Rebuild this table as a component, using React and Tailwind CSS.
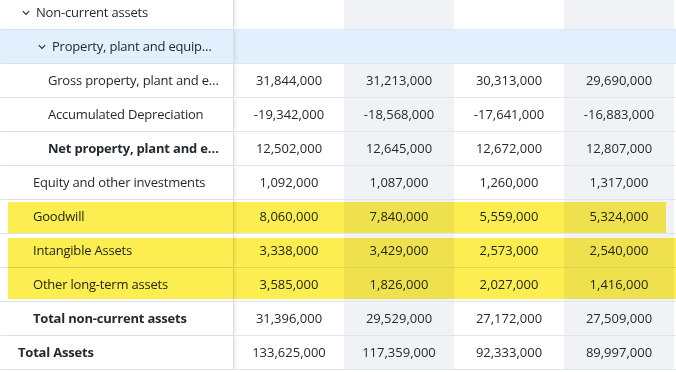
import React from 'react';

const ROWS = [
  { label: 'Non-current assets', indent: 'pl-[22px]', caret: true, values: ['', '', '', ''] },
  { label: 'Property, plant and equipment', indent: 'pl-[38px]', caret: true, blue: true, values: ['', '', '', ''] },
  { label: 'Gross property, plant and equipment', indent: 'pl-[48px]', values: ['31,844,000', '31,213,000', '30,313,000', '29,690,000'] },
  { label: 'Accumulated Depreciation', indent: 'pl-[48px]', values: ['-19,342,000', '-18,568,000', '-17,641,000', '-16,883,000'] },
  { label: 'Net property, plant and equipment', indent: 'pl-[48px]', bold: true, values: ['12,502,000', '12,645,000', '12,672,000', '12,807,000'] },
  { label: 'Equity and other investments', indent: 'pl-[33px]', values: ['1,092,000', '1,087,000', '1,260,000', '1,317,000'] },
  { label: 'Goodwill', indent: 'pl-[33px]', values: ['8,060,000', '7,840,000', '5,559,000', '5,324,000'] },
  { label: 'Intangible Assets', indent: 'pl-[33px]', values: ['3,338,000', '3,429,000', '2,573,000', '2,540,000'] },
  { label: 'Other long-term assets', indent: 'pl-[33px]', values: ['3,585,000', '1,826,000', '2,027,000', '1,416,000'] },
  { label: 'Total non-current assets', indent: 'pl-[33px]', bold: true, values: ['31,396,000', '29,529,000', '27,172,000', '27,509,000'] },
  { label: 'Total Assets', indent: 'pl-[18px]', bold: true, values: ['133,625,000', '117,359,000', '92,333,000', '89,997,000'] },
];

const Caret = () => (
  <svg width="8" height="6" viewBox="0 0 8 6" className="mr-[6px] shrink-0">
    <path d="M0.8 1.2l3.2 3.2 3.2-3.2" fill="none" stroke="#232a31" strokeWidth="1.1" />
  </svg>
);

function Row({ row }) {
  const bg = row.blue ? 'bg-[#e2effc]' : '';
  return (
    <div className={`flex h-[34px] border-b border-[#e2e5ea] ${bg}`}>
      <div className={`w-[234px] shrink-0 flex items-center border-r border-[#dadde3] shadow-[3px_0_3px_-1px_rgba(0,0,0,0.07)] pr-[10px] tracking-[-0.2px] ${row.indent} ${row.bold ? 'font-bold' : ''}`}>
        {row.caret && <Caret />}
        <span className="truncate">{row.label}</span>
      </div>
      {row.values.map((v, i) => (
        <div
          key={i}
          className={`w-[110px] shrink-0 flex items-center justify-center ${!row.blue && i % 2 === 1 ? 'bg-[#f1f2f5]' : ''}`}
        >
          {v}
        </div>
      ))}
      <div className="flex-1" />
    </div>
  );
}

export default function App() {
  return (
    <div
      className="relative w-[676px] h-[372px] overflow-hidden bg-white text-[13px] text-[#232a31]"
      style={{ fontFamily: '"Open Sans", sans-serif' }}
    >
      <div className="-mt-[4px]">
        {ROWS.map((r) => <Row key={r.label} row={r} />)}
      </div>
      {/* marker highlights */}
      <div className="absolute left-[8px] top-[202px] w-[658px] h-[31px] bg-[#fcee50] mix-blend-multiply" />
      <div className="absolute left-[8px] top-[238px] w-[668px] h-[61px] bg-[#fcee50] mix-blend-multiply" />
    </div>
  );
}
